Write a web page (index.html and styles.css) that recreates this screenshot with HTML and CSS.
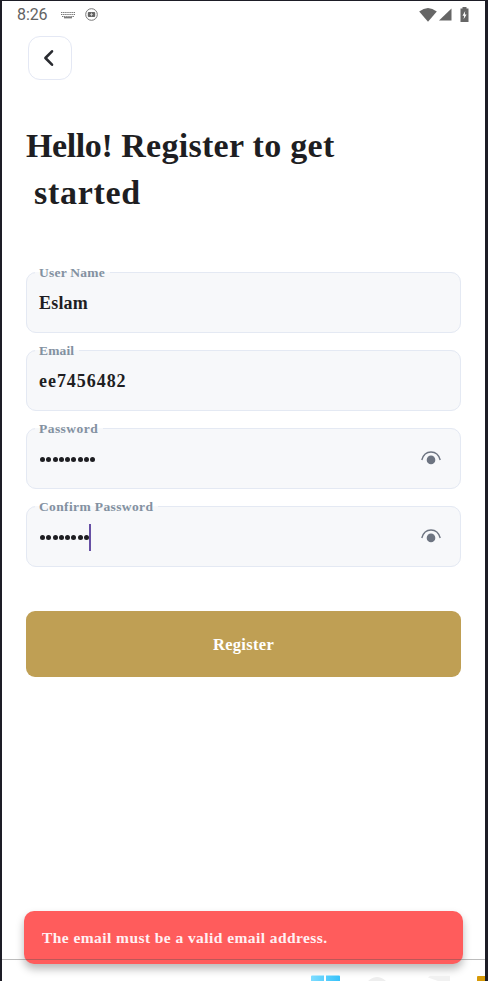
FILE: index.html
```html
<!DOCTYPE html>
<html lang="en">
<head>
<meta charset="utf-8">
<title>Register</title>
<link rel="stylesheet" href="styles.css">
</head>
<body>
<main class="screen">
  <header class="status">
    <span class="time">8:26</span>
    <svg class="keyboard" width="14" height="8" viewBox="0 0 14 8" fill="none" stroke="#757575"><path d="M0 1.5h14M0 3.5h14" stroke-width="1" stroke-dasharray="1.4 .7"/><path d="M1 5.5h12" stroke-width="1" stroke-dasharray="1.4 .7"/><path d="M3 6.7h8" stroke-width="1.3"/></svg>
    <svg class="record" width="13" height="13" viewBox="0 0 13 13"><circle cx="6.5" cy="6.5" r="5.8" fill="none" stroke="#777"/><rect x="2.8" y="4" width="7.4" height="5" rx="1" fill="#666"/><path d="M6.5 4.8v3.4M5.2 6.5h2.6" stroke="#ddd" stroke-width=".8"/></svg>
    <span class="spacer"></span>
    <svg width="18" height="14" viewBox="0 0 18 14" fill="#666"><path d="M.2 3.6Q9-3.4 17.8 3.6L9 13.7z"/></svg>
    <svg class="signal" width="13" height="13" viewBox="0 0 13 13" fill="#666"><path d="M12.5.5v12H0z"/></svg>
    <svg class="battery" width="9" height="15" viewBox="0 0 9 15"><path d="M2.5 0h4v1.5H8.5V15H.5V1.5h2z" fill="#666"/><path d="M5.2 4L2.5 8.8h1.7l-.6 3.5 3-4.9H4.8z" fill="#fff"/></svg>
  </header>
  <button class="back" aria-label="Back"><svg width="12" height="18" viewBox="0 0 12 18" fill="none" stroke="#292b30" stroke-width="2.6" stroke-linecap="round" stroke-linejoin="round"><path d="M9 2.3L2.4 9 9 15.7"/></svg></button>
  <h1><span class="hello">Hello!</span> Register to get<br><span class="second">started</span></h1>
  <form class="form">
    <fieldset class="field"><legend class="l-user">User Name</legend><div class="row"><span class="value v-user">Eslam</span></div></fieldset>
    <fieldset class="field"><legend class="l-email">Email</legend><div class="row"><span class="value v-email">ee7456482</span></div></fieldset>
    <fieldset class="field"><legend class="l-pass">Password</legend><div class="row"><span class="dots"><i></i><i></i><i></i><i></i><i></i><i></i><i></i><i></i><i></i></span><svg class="eye" width="20" height="14" viewBox="0 0 20 14"><path d="M.8 9C2.2 3.8 5.7 1 10 1s7.8 2.8 9.2 8" fill="none" stroke="#6d7481" stroke-width="1.4"/><circle cx="10" cy="8.9" r="4.3" fill="#6d7481"/></svg></div></fieldset>
    <fieldset class="field"><legend class="l-confirm">Confirm Password</legend><div class="row"><span class="dots"><i></i><i></i><i></i><i></i><i></i><i></i><i></i><i></i></span><b class="caret"></b><svg class="eye" width="20" height="14" viewBox="0 0 20 14"><path d="M.8 9C2.2 3.8 5.7 1 10 1s7.8 2.8 9.2 8" fill="none" stroke="#6d7481" stroke-width="1.4"/><circle cx="10" cy="8.9" r="4.3" fill="#6d7481"/></svg></div></fieldset>
    <button class="register" type="button">Register</button>
  </form>
</main>
<div class="toast" role="alert">The email must be a valid email address.</div>
<div class="rule"></div>
<svg class="taskbar" width="178" height="6" viewBox="0 0 178 6">
  <defs><linearGradient id="sky"><stop stop-color="#7edcff"/><stop offset="1" stop-color="#35c1fa"/></linearGradient></defs>
  <path d="M1 6V1.5Q1 .4 2 .4h12V6zM16 6V.4h13Q30 .4 30 1.5V6z" fill="url(#sky)"/>
  <path d="M58 6Q67-2 76 6z" fill="#eee"/><path d="M118 2.5L120 .8h20V6h-12z" fill="#f1f1f1"/><path d="M167 6V2q0-1 1-1h10v5z" fill="#d79a08"/>
</svg>
</body>
</html>
```
FILE: styles.css
```css
* { box-sizing: border-box; }
body {
  margin: 0;
  width: 488px;
  height: 981px;
  overflow: hidden;
  position: relative;
  background: #fff;
  border-style: solid;
  border-color: #1d1d26;
  border-width: 1px 3px 0 2px;
  font-family: "Liberation Serif", serif;
  font-weight: bold;
  color: #1e1e22;
}
svg { display: block; flex: none; }
.screen { padding: 0 24px; }
.status {
  display: flex;
  align-items: center;
  height: 27px;
  margin: 0 -9px;
  padding-right: 1px;
}
.time { font: 16px/18px Roboto, sans-serif; color: #626262; letter-spacing: -.1px; width: 44px; padding-top: 1px; }
.keyboard { margin-left: 0; }
.record { margin-left: 10px; }
.spacer { flex: 1; }
.signal { margin-left: 2px; }
.battery { margin: 0 0 0 8px; }
.back {
  display: flex;
  align-items: center;
  width: 44px;
  height: 44px;
  margin: 8px 0 0 2px;
  padding: 0 0 0 14px;
  border: 1px solid #e4e8f4;
  border-radius: 12px;
  background: #fff;
}
h1 {
  margin: 42px 0 0;
  font-size: 34px;
  line-height: 47px;
  letter-spacing: .3px;
  white-space: nowrap;
}
.hello { letter-spacing: -.4px; }
.second { margin-left: 8px; letter-spacing: .7px; }
.form { display: flex; flex-direction: column; margin-top: 48px; }
.field {
  height: 69px;
  min-width: 0;
  margin: 0 0 9px;
  padding: 0 19px 0 12px;
  border: 1px solid #e4e9f3;
  border-radius: 10px;
  background: #f7f8fa;
}
.row { display: flex; align-items: center; height: 46px; }
legend {
  height: 16px;
  margin-left: -4px;
  padding: 0 5px 0 4px;
  font-size: 13.5px;
  line-height: 18px;
  color: #8391a1;
}
.l-user { letter-spacing: .25px; }
.l-email { letter-spacing: .15px; }
.l-pass { letter-spacing: .45px; }
.l-confirm { letter-spacing: .37px; }
.value { font-size: 18px; line-height: 24px; }
.v-user { letter-spacing: .2px; }
.v-email { letter-spacing: .95px; }
.dots { display: flex; gap: 1.25px; margin-left: 1px; }
.dots i { width: 5px; height: 5px; border-radius: 50%; background: #1e1e22; }
.caret { width: 2px; height: 27px; background: #6750a4; }
.eye { margin: 0 0 2px auto; }
.register {
  height: 66px;
  margin-top: 35px;
  padding: 2px 0 0;
  border: 0;
  border-radius: 9px;
  background: #bf9f54;
  color: #fff;
  font: bold 16.5px "Liberation Serif", serif;
  letter-spacing: .3px;
}
.toast {
  position: absolute;
  left: 22px;
  top: 910px;
  width: 439px;
  height: 53px;
  padding-left: 18px;
  border-radius: 10px;
  background: #ff5c5c;
  box-shadow: 0 5px 9px rgba(0,0,0,.28);
  color: #fff0f3;
  font-size: 15.5px;
  line-height: 54px;
  letter-spacing: .43px;
}
.rule { position: absolute; left: 0; right: 0; top: 958px; height: 1px; background: rgba(80,80,80,.38); }
.taskbar { position: absolute; left: 308px; top: 974px; }
```
